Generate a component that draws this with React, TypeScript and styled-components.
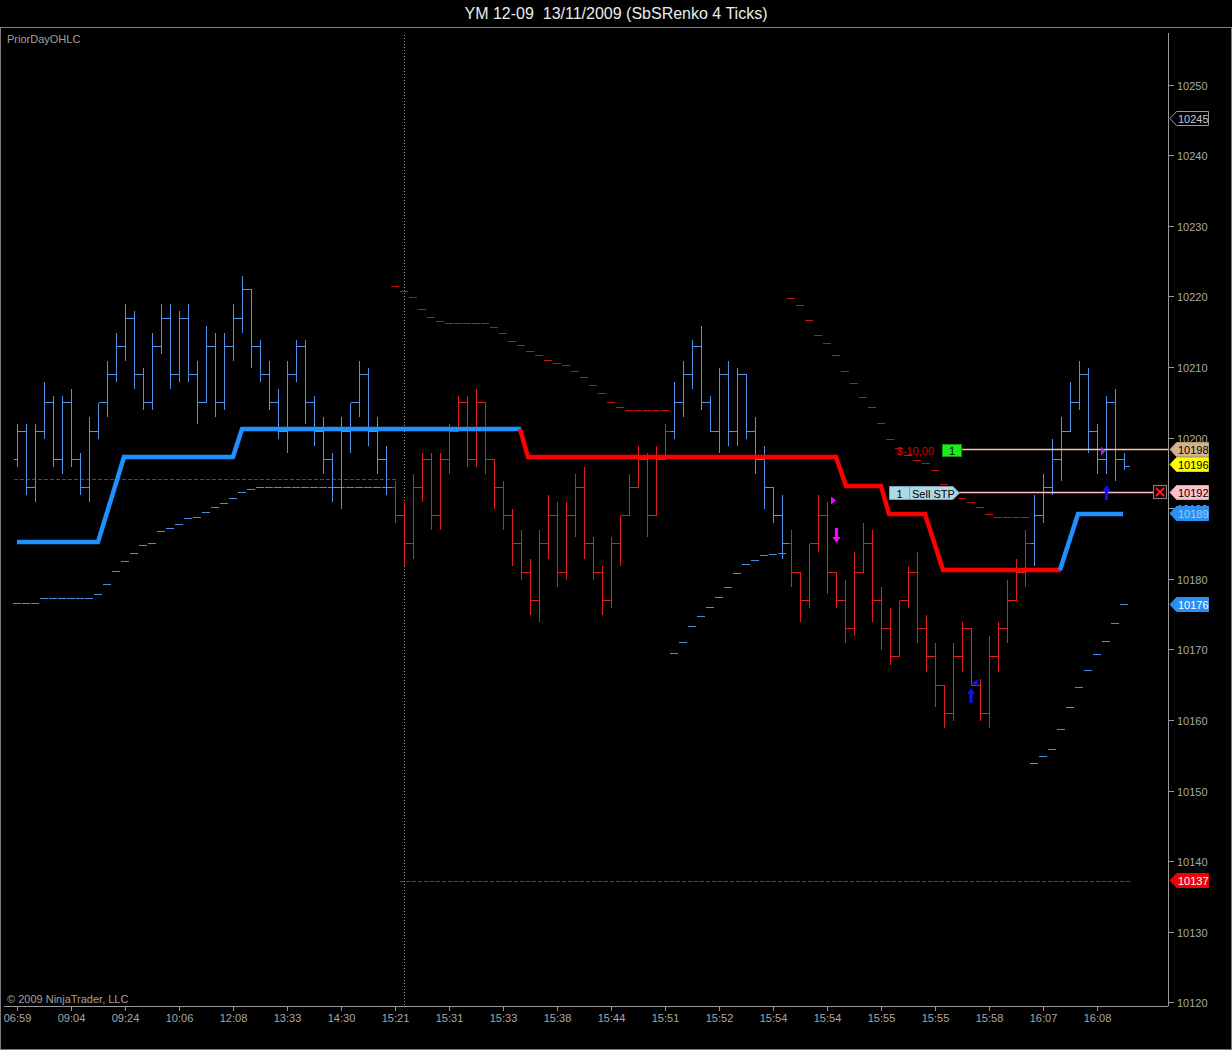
import React from 'react';
import styled, { createGlobalStyle } from 'styled-components';

const FONT = `"Liberation Sans", Arial, sans-serif`;

const GlobalStyle = createGlobalStyle`
  html, body { margin: 0; padding: 0; background: #000; }
  #root { width: 1232px; height: 1050px; }
`;

const ChartWindow = styled.div`
  width: 1232px;
  height: 1050px;
  display: flex;
  flex-direction: column;
  background: #000;
  font-family: ${FONT};
  overflow: hidden;
`;

const TitleBar = styled.div`
  height: 27px;
  flex: none;
  display: flex;
  align-items: center;
  justify-content: center;
  color: #ececec;
  font-size: 16px;
  white-space: pre;
`;

const ChartFrame = styled.div`
  flex: 1;
  min-height: 0;
  border: 1px solid #7c7c7c;
  display: grid;
  grid-template-columns: 1167px 1fr;
  grid-template-rows: 978px 1fr;
`;

const PlotCell = styled.div`
  position: relative;
`;

const AxisCell = styled.div`
  min-width: 0;
  position: relative;
  z-index: 1;
`;

const TimeCell = styled.div`
  grid-column: 1 / -1;
`;

const Canvas = styled.svg<{ $spill?: boolean }>`
  display: block;
  font-family: ${FONT};
  font-size: 11px;
  overflow: ${(p) => (p.$spill ? 'visible' : 'hidden')};
`;

const PlotNote = styled.span<{ $at: 'top' | 'bottom' }>`
  position: absolute;
  left: 6px;
  ${(p) => (p.$at === 'top' ? 'top: 5px;' : 'bottom: 1px;')}
  color: #a0a0a0;
  font-size: 11px;
  line-height: 12px;
  pointer-events: none;
`;

// price -> page y
const py = (p: number) => 84.5 + (10250 - p) * 7.0615;
const level = (k: number) => 10201 + 4 * k;
const barX = (i: number) => 17.5 + 9 * i;

const UP = '#4d94e8';
const DOWN = '#e01e1e';

// brick closes, in 4 point levels above/below 10201
const CLOSES = [
  0, -2, 0, 1, -1, 1, -1, -2, 0, 1,
  2, 3, 4, 2, 1, 3, 4, 2, 4, 2,
  1, 3, 1, 3, 4, 5, 3, 2, 1, 0,
  2, 3, 1, 0, -1, -2, 0, 1, 2, 0,
  -1, -2, -3, -4, -2, -1, -3, -1, 0, 1,
  -1, 1, -1, -2, -3, -4, -5, -6, -4, -3,
  -5, -3, -2, -4, -5, -6, -4, -3, -2, -1,
  -3, -1, 0, 1, 2, 3, 1, 0, 2, 0,
  2, 0, -1, -2, -3, -4, -5, -6, -4, -3,
  -5, -6, -7, -5, -4, -6, -7, -8, -6, -5,
  -7, -8, -9, -10, -8, -7, -9, -10, -8, -7,
  -6, -5, -4, -3, -2, -1, 0, 1, 2, 0,
  -1, 1, -1,
];

const isUpTrend = (i: number) => i <= 41 || (i >= 73 && i <= 85) || i >= 113;

const rnd = (i: number, s: number) => {
  const v = Math.sin(i * 91.7 + s * 17.3) * 10000;
  return v - Math.floor(v);
};

type Bar = { x: number; o: number; c: number; h: number; l: number; color: string };

const bars: Bar[] = CLOSES.map((k, i) => {
  const o = level(i === 0 ? -1 : CLOSES[i - 1]);
  const c = level(k);
  return {
    x: barX(i),
    o,
    c,
    h: Math.max(o, c) + Math.round(rnd(i, 1) * 3),
    l: Math.min(o, c) - Math.round(rnd(i, 2) * 3),
    color: isUpTrend(i) ? UP : DOWN,
  };
});
// the bar still forming
bars.push({ x: barX(123), o: 10197, c: 10196, h: 10198, l: 10195.6, color: UP });

// trailing stop dots, page y per bar
const STOPS: { start: number; color: string; ys: number[] }[] = [
  {
    start: 0,
    color: '#4a8ee0',
    ys: [603, 603, 603, 598, 598, 598, 598, 598, 598, 594, 584, 571, 561, 553, 545, 543, 531, 528, 524, 518,
      517, 512, 507, 503, 498, 492, 489, ...Array(15).fill(487)],
  },
  {
    start: 42,
    color: '#c81414',
    ys: [286, 291, 297, 309, 317, 321, 323, 323, 323, 323, 323, 327, 333, 341, 345, 351, 355, 360, 363, 365,
      371, 377, 385, 393, 402, 407, 410, 410, 410, 410, 410],
  },
  { start: 73, color: '#4a8ee0', ys: [653, 642, 626, 616, 607, 597, 587, 573, 564, 560, 555, 554, 553] },
  {
    start: 86,
    color: '#c81414',
    ys: [298, 305, 320, 335, 343, 355, 371, 383, 397, 407, 423, 439, 448, 455, 460, 463, 470, 484, 492, 498,
      502, 507, 514, 517, 517, 517, 517],
  },
  { start: 113, color: '#4a8ee0', ys: [763, 756, 749, 729, 707, 687, 670, 654, 641, 623, 604] },
];

const TREND: { color: string; pts: [number, number][] }[] = [
  { color: '#1e90ff', pts: [[17, 542], [98, 542], [124, 457], [233, 457], [242, 429], [521, 429]] },
  {
    color: '#ff0000',
    pts: [[520, 429], [528, 457], [836, 457], [846, 486], [881, 486], [889, 514], [925, 514], [943, 570], [1061, 570]],
  },
  { color: '#1e90ff', pts: [[1060, 570], [1078, 514], [1123, 514]] },
];

const TIMES = ['06:59', '09:04', '09:24', '10:06', '12:08', '13:33', '14:30', '15:21', '15:31', '15:33', '15:38',
  '15:44', '15:51', '15:52', '15:54', '15:54', '15:55', '15:55', '15:58', '16:07', '16:08'];

const PRICE_LABELS = Array.from({ length: 14 }, (_, i) => 10250 - i * 10);

type Tag = { p: number; y: number; fill: string; stroke: string; text: string };
const TAGS: Tag[] = [
  { p: 10245, y: 118.5, fill: '#000', stroke: '#9a9a9a', text: '#c8c8c8' },
  { p: 10198, y: 449.5, fill: '#d2b48c', stroke: '#b89a70', text: '#000' },
  { p: 10196, y: 464.5, fill: '#ffff00', stroke: '#d8d800', text: '#000' },
  { p: 10192, y: 492.5, fill: '#ffc0cb', stroke: '#e0a0aa', text: '#000' },
  { p: 10189, y: 513.5, fill: '#2a8ff0', stroke: '#2a8ff0', text: '#a4cbf2' },
  { p: 10176, y: 604.5, fill: '#2a8ff0', stroke: '#2a8ff0', text: '#fff' },
  { p: 10137, y: 880.5, fill: '#f00000', stroke: '#f00000', text: '#fff' },
];

const snap = (v: number) => Math.round(v) + 0.5;

const PriceBars = () => (
  <g strokeWidth={1} fill="none" shapeRendering="crispEdges">
    {bars.map((b, i) => (
      <path
        key={i}
        stroke={b.color}
        d={`M${b.x} ${snap(py(b.h))}V${snap(py(b.l))}M${b.x - 4} ${snap(py(b.o))}H${b.x}M${b.x} ${snap(py(b.c))}H${b.x + 5}`}
      />
    ))}
  </g>
);

const StopDots = () => (
  <g strokeWidth={1} shapeRendering="crispEdges">
    {STOPS.map((s) => (
      <path
        key={s.start}
        stroke={s.color}
        d={s.ys.map((y, j) => `M${barX(s.start + j) - 4.5} ${y + 0.5}h8`).join('')}
      />
    ))}
  </g>
);

const TrendLine = () => (
  <g fill="none" strokeWidth={4.5} strokeLinejoin="miter">
    {TREND.map((t, i) => (
      <polyline key={i} stroke={t.color} points={t.pts.map((p) => p.join(',')).join(' ')} />
    ))}
  </g>
);

const Arrow = ({ x, tip, up, color }: { x: number; tip: number; up: boolean; color: string }) => {
  const s = up ? 1 : -1;
  return (
    <path
      fill={color}
      d={`M${x} ${tip}L${x + 4} ${tip + 6 * s}H${x + 1.6}V${tip + 15 * s}H${x - 1.6}V${tip + 6 * s}H${x - 4}Z`}
    />
  );
};

const Markers = () => (
  <g>
    <path fill="#ff00ff" d="M831 496.5L836 500.5L831 504.5Z" />
    <Arrow x={836.5} tip={543} up={false} color="#ff00ff" />
    <path fill="#1010ff" d="M977.5 679.5L972 683L977.5 686.5Z" />
    <Arrow x={971} tip={688} up color="#1010ff" />
    <path fill="#9a30f0" d="M1101 446.5L1105.5 451L1101 455.5Z" />
    <Arrow x={1106.5} tip={485} up color="#1010ff" />
  </g>
);

const Orders = () => (
  <g>
    <line x1={962} x2={1168} y1={449.5} y2={449.5} stroke="#f0c8a8" strokeWidth={1.4} />
    <text x={934} y={455} textAnchor="end" fill="#d40000">$-10,00</text>
    <rect x={942.5} y={444.5} width={19} height={12} fill="#18ee18" stroke="#0c9a0c" />
    <text x={952} y={455} textAnchor="middle" fill="#000">1</text>

    <line x1={959} x2={1153} y1={492.5} y2={492.5} stroke="#ffc0cb" strokeWidth={1.4} />
    <path d="M889.5 486.5H953L959.5 493L953 499.5H889.5Z" fill="#add8e6" stroke="#7aa2b4" />
    <line x1={909.5} x2={909.5} y1={487} y2={499} stroke="#7aa2b4" />
    <text x={899.5} y={497.5} textAnchor="middle" fill="#000">1</text>
    <text x={912} y={497.5} fill="#000">Sell STP</text>

    <rect x={1153.5} y={485.5} width={13} height={13} fill="#1c0404" stroke="#858585" />
    <path d="M1156 488L1164 496M1164 488L1156 496" stroke="#ff1a1a" strokeWidth={2} />
  </g>
);

const PlotArea = () => (
  <Canvas width={1167} height={978} viewBox="1 28 1167 978">
    <line x1={404.5} x2={404.5} y1={35} y2={1006} stroke="#949494" strokeDasharray="1 2" />
    <g stroke="#d41212" strokeDasharray="4 2" shapeRendering="crispEdges">
      <line x1={14} x2={398} y1={479.5} y2={479.5} />
      <line x1={400} x2={1130} y1={881.5} y2={881.5} />
    </g>
    <StopDots />
    <PriceBars />
    <TrendLine />
    <Orders />
    <Markers />
  </Canvas>
);

const PriceAxis = () => (
  <Canvas $spill width={63} height={978} viewBox="1168 28 63 978">
    <line x1={1168.5} x2={1168.5} y1={33} y2={1006} stroke="#9a9a9a" />
    {PRICE_LABELS.map((p) => {
      const y = snap(py(p));
      return (
        <g key={p}>
          <line x1={1168} x2={1174} y1={y} y2={y} stroke="#9a9a9a" />
          <text x={1177} y={y + 4} fill="#a8a8a8">{p}</text>
        </g>
      );
    })}
    {TAGS.map((t) => (
      <g key={t.p}>
        <path
          d={`M1170 ${t.y}L1176.5 ${t.y - 7}H1208.5V${t.y + 7}H1176.5Z`}
          fill={t.fill}
          stroke={t.stroke}
        />
        <text x={1178} y={t.y + 4} fill={t.text}>{t.p}</text>
      </g>
    ))}
  </Canvas>
);

const TimeAxis = () => (
  <Canvas width={1230} height={43} viewBox="1 1006 1230 43">
    <line x1={4} x2={1168} y1={1006.5} y2={1006.5} stroke="#9a9a9a" />
    {TIMES.map((t, j) => {
      const x = barX(j * 6);
      return (
        <g key={j}>
          <line x1={x} x2={x} y1={1006} y2={1011} stroke="#9a9a9a" />
          <text x={x} y={1022} textAnchor="middle" fill="#a8a8a8">{t}</text>
        </g>
      );
    })}
  </Canvas>
);

export default function App() {
  return (
    <>
      <GlobalStyle />
      <ChartWindow>
        <TitleBar>{'YM 12-09  13/11/2009 (SbSRenko 4 Ticks)'}</TitleBar>
        <ChartFrame>
          <PlotCell>
            <PlotArea />
            <PlotNote $at="top">PriorDayOHLC</PlotNote>
            <PlotNote $at="bottom">© 2009 NinjaTrader, LLC</PlotNote>
          </PlotCell>
          <AxisCell>
            <PriceAxis />
          </AxisCell>
          <TimeCell>
            <TimeAxis />
          </TimeCell>
        </ChartFrame>
      </ChartWindow>
    </>
  );
}
